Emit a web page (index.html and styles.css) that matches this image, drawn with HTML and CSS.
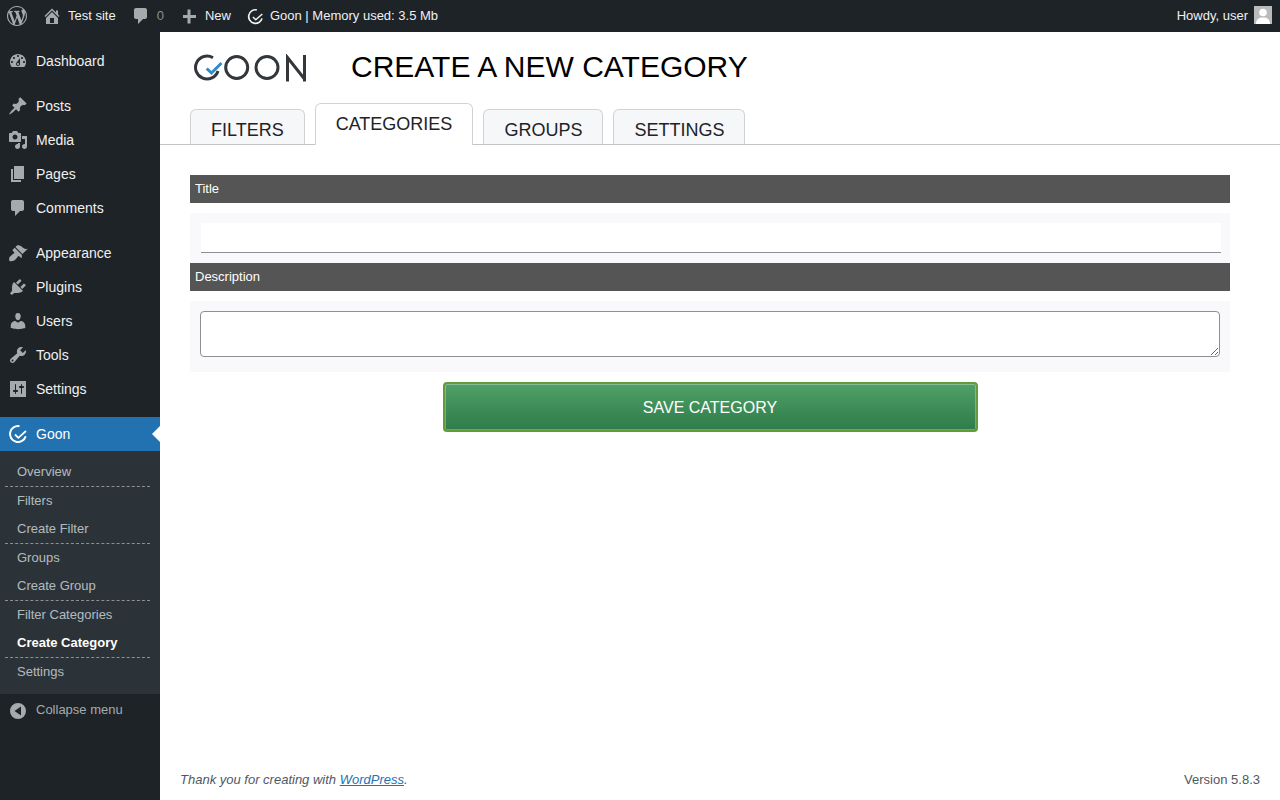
FILE: index.html
```html
<!DOCTYPE html>
<html lang="en">
<head>
<meta charset="utf-8">
<title>Create a new category</title>
<link rel="stylesheet" href="styles.css">
</head>
<body>
<svg class="defs" width="0" height="0" aria-hidden="true">
  <symbol id="goon" viewBox="0 0 20 20"><path d="M11.500 2.200A8 8 0 1 0 17.700 12.200" fill="none" stroke="currentColor" stroke-width="2"/><path d="M7 10.500l3.300 3.300L18 7" fill="none" stroke="currentColor" stroke-width="1.800"/></symbol>
</svg>
<header class="adminbar">
  <div class="ab-group">
    <svg class="ab-icon" viewBox="0 0 20 20"><path d="M20 10c0-5.510-4.490-10-10-10C4.480 0 0 4.490 0 10c0 5.520 4.480 10 10 10 5.510 0 10-4.480 10-10zM7.780 15.370L4.370 6.220c.55-.02 1.170-.08 1.170-.08.5-.06.44-1.130-.06-1.110 0 0-1.450.11-2.370.11-.18 0-.37 0-.58-.01C4.120 2.690 6.870 1.110 10 1.110c2.330 0 4.450.87 6.050 2.340-.68-.11-1.650.39-1.650 1.580 0 .74.45 1.360.9 2.100.35.61.55 1.360.55 2.460 0 1.490-1.400 5-1.400 5l-3.030-8.370c.54-.02.82-.17.82-.17.5-.05.44-1.250-.06-1.220 0 0-1.440.12-2.380.12-.87 0-2.330-.12-2.330-.12-.5-.03-.56 1.200-.06 1.220l.92.08 1.260 3.410zM17.410 10c.24-.64.74-1.870.43-4.250.7 1.290 1.050 2.710 1.050 4.250 0 3.290-1.730 6.240-4.400 7.780.97-2.590 1.940-5.200 2.920-7.780zM6.100 18.090C3.120 16.650 1.110 13.530 1.110 10c0-1.300.23-2.480.72-3.590C3.250 10.300 4.670 14.200 6.100 18.090zm4.030-6.630l2.580 6.980c-.86.29-1.760.45-2.710.45-.79 0-1.570-.11-2.290-.33.81-2.380 1.620-4.740 2.420-7.100z"/></svg>
    <a class="ab-item"><svg class="ab-icon" viewBox="0 0 20 20"><path fill-rule="evenodd" d="M16 8.500l1.530 1.530-1.060 1.060L10 4.620l-6.470 6.470-1.060-1.060L10 2.500l4 4v-2h2v4zm-6-2.460l6 5.990V18H4v-5.970zM12 17v-5H8v5h4z"/></svg>Test site</a>
    <a class="ab-item ab-muted"><svg class="ab-icon" viewBox="0 0 20 20"><path d="M5 2h9c1.100 0 2 .9 2 2v7c0 1.100-.9 2-2 2h-2l-5 5v-5H5c-1.100 0-2-.9-2-2V4c0-1.100.9-2 2-2z"/></svg>0</a>
    <a class="ab-item"><svg class="ab-icon" viewBox="0 0 20 20"><path d="M8.500 3.500h3v5.500H17v3h-5.500v5.500h-3V12H4V9h4.500z"/></svg>New</a>
    <a class="ab-item ab-goon"><svg class="ab-goon-icon"><use href="#goon"/></svg>Goon | Memory used: 3.5 Mb</a>
  </div>
  <a class="ab-user">Howdy, user
    <svg class="avatar" viewBox="0 0 18 18"><rect width="18" height="18" fill="#b9bbbd"/><circle cx="9" cy="6.500" r="3.800" fill="#fff"/><path d="M2 18c0-5 3-6.500 7-6.500s7 1.500 7 6.500z" fill="#fff"/></svg>
  </a>
</header>
<div class="shell">
  <nav class="sidebar">
    <ul class="menu">
      <li><a class="menu-item"><svg class="mi" viewBox="0 0 20 20"><path fill-rule="evenodd" d="M3.760 16h12.480c1.100-1.370 1.760-3.110 1.760-5 0-4.420-3.580-8-8-8s-8 3.580-8 8c0 1.890.66 3.630 1.760 5zM10 4c.55 0 1 .45 1 1s-.45 1-1 1-1-.45-1-1 .45-1 1-1zM6 6c.55 0 1 .45 1 1s-.45 1-1 1-1-.45-1-1 .45-1 1-1zm8 0c.55 0 1 .45 1 1s-.45 1-1 1-1-.45-1-1 .45-1 1-1zm-5.370 5.550L12 7v6c0 1.100-.9 2-2 2s-2-.9-2-2c0-.57.24-1.080.63-1.450zM4 10c.55 0 1 .45 1 1s-.45 1-1 1-1-.45-1-1 .45-1 1-1zm12 0c.55 0 1 .45 1 1s-.45 1-1 1-1-.45-1-1 .45-1 1-1zm-5 3c0-.55-.45-1-1-1s-1 .45-1 1 .45 1 1 1 1-.45 1-1z"/></svg>Dashboard</a></li>
      <li class="sep-top"><a class="menu-item"><svg class="mi" viewBox="0 0 20 20"><path d="M10.440 3.020l1.820-1.820 6.360 6.350-1.830 1.820c-1.050-.68-2.480-.57-3.410.36l-.75.75c-.92.93-1.040 2.350-.35 3.410l-1.830 1.820-2.410-2.410-2.800 2.790c-.42.42-3.380 2.710-3.800 2.290s1.860-3.390 2.280-3.810l2.790-2.790L4.100 9.360l1.830-1.820c1.050.69 2.480.57 3.400-.36l.75-.75c.93-.92 1.050-2.350.36-3.410z"/></svg>Posts</a></li>
      <li><a class="menu-item"><svg class="mi" viewBox="0 0 20 20"><path fill-rule="evenodd" d="M13 11V4c0-.55-.45-1-1-1h-1.670L9 1H5L3.670 3H2c-.55 0-1 .45-1 1v7c0 .55.45 1 1 1h10c.55 0 1-.45 1-1zM7 4.500c1.380 0 2.500 1.120 2.500 2.500S8.380 9.500 7 9.500 4.500 8.380 4.500 7 5.620 4.500 7 4.500zM14 6h5v10.500c0 1.380-1.120 2.500-2.500 2.500S14 17.880 14 16.500s1.120-2.500 2.500-2.500c.17 0 .34.02.5.05V9h-3V6zm-4 8.050V13h2v3.500c0 1.380-1.120 2.500-2.500 2.500S7 17.880 7 16.500 8.120 14 9.500 14c.17 0 .34.02.5.05z"/></svg>Media</a></li>
      <li><a class="menu-item"><svg class="mi" viewBox="0 0 20 20"><path d="M6 15V2h10v13H6zm-1 1h8v2H3V5h2v11z"/></svg>Pages</a></li>
      <li><a class="menu-item"><svg class="mi" viewBox="0 0 20 20"><path d="M5 2h9c1.100 0 2 .9 2 2v7c0 1.100-.9 2-2 2h-2l-5 5v-5H5c-1.100 0-2-.9-2-2V4c0-1.100.9-2 2-2z"/></svg>Comments</a></li>
      <li class="sep-top"><a class="menu-item"><svg class="mi" viewBox="0 0 20 20"><path d="M14.480 11.060L7.410 3.990l1.500-1.500c.5-.56 2.300-.47 3.510.32 1.210.8 1.430 1.280 2.910 2.100 1.180.64 2.450 1.260 4.450.85zm-.71.71L6.700 4.700 4.930 6.470c-.39.39-.39 1.020 0 1.410l1.060 1.060c.39.39.39 1.030 0 1.420-.6.6-1.430 1.110-2.210 1.690-.35.26-.7.53-1.010.84C1.430 13.230.78 15.550 1.370 18c2.450.59 4.770-.06 6.110-1.400.31-.31.58-.66.84-1.010.58-.78 1.090-1.610 1.690-2.210.39-.39 1.030-.39 1.420 0l1.060 1.060c.39.39 1.020.39 1.410 0z"/></svg>Appearance</a></li>
      <li><a class="menu-item"><svg class="mi" viewBox="0 0 20 20"><path d="M13.110 4.360L9.870 7.600 8 5.730l3.240-3.240c.35-.34 1.050-.2 1.560.32.52.51.66 1.210.31 1.550zm-8 1.770l.91-1.120 9.010 9.010-1.190.84c-.71.71-2.630 1.160-3.820 1.160H6.140L4.900 17.260c-.59.59-1.540.59-2.120 0-.59-.58-.59-1.530 0-2.120l1.240-1.240v-3.880c0-1.130.4-3.190 1.090-3.890zm7.260 3.970l3.240-3.240c.34-.35 1.040-.21 1.550.31.52.51.66 1.210.31 1.550l-3.240 3.250z"/></svg>Plugins</a></li>
      <li><a class="menu-item"><svg class="mi" viewBox="0 0 20 20"><path d="M10 9.250c-2.270 0-2.730-3.440-2.730-3.440C7 4.020 7.820 2 9.970 2c2.160 0 2.980 2.020 2.710 3.810 0 0-.41 3.440-2.680 3.440zm0 2.570L12.720 10c2.390 0 4.520 2.330 4.520 4.530v2.490s-3.650 1.130-7.240 1.130c-3.650 0-7.240-1.130-7.240-1.130v-2.490c0-2.250 1.940-4.480 4.470-4.480z"/></svg>Users</a></li>
      <li><a class="menu-item"><svg class="mi" viewBox="0 0 20 20"><path fill-rule="evenodd" d="M16.680 9.770c-1.340 1.340-3.300 1.670-4.950.99l-5.410 6.520c-.99.99-2.590.99-3.580 0s-.99-2.590 0-3.570l6.520-5.420c-.68-1.650-.35-3.610.99-4.950 1.280-1.280 3.120-1.620 4.720-1.060l-2.890 2.890 2.820 2.820 2.860-2.870c.53 1.580.18 3.390-1.080 4.650zM3.810 16.210c.4.39 1.040.39 1.430 0 .4-.4.4-1.040 0-1.430-.39-.4-1.030-.4-1.430 0-.39.39-.39 1.030 0 1.430z"/></svg>Tools</a></li>
      <li><a class="menu-item"><svg class="mi" viewBox="0 0 20 20"><path fill-rule="evenodd" d="M18 18V2H2v16zM8 11h1c.55 0 1 .45 1 1s-.45 1-1 1H8v1.500c0 .28-.22.5-.5.5s-.5-.22-.5-.5V13H6c-.55 0-1-.45-1-1s.45-1 1-1h1V5.500c0-.28.22-.5.5-.5s.5.22.5.5V11zm5-2h-1c-.55 0-1-.45-1-1s.45-1 1-1h1V5.500c0-.28.22-.5.5-.5s.5.22.5.5V7h1c.55 0 1 .45 1 1s-.45 1-1 1h-1v5.500c0 .28-.22.5-.5.5s-.5-.22-.5-.5V9z"/></svg>Settings</a></li>
      <li class="sep-top"><a class="menu-item current"><svg class="mi"><use href="#goon"/></svg>Goon</a>
        <ul class="submenu">
          <li class="dash"><a>Overview</a></li>
          <li><a>Filters</a></li>
          <li class="dash"><a>Create Filter</a></li>
          <li><a>Groups</a></li>
          <li class="dash"><a>Create Group</a></li>
          <li><a>Filter Categories</a></li>
          <li class="dash"><a class="active">Create Category</a></li>
          <li><a>Settings</a></li>
        </ul>
      </li>
    </ul>
    <a class="collapse"><svg class="mi collapse-icon" viewBox="0 0 20 20"><path fill-rule="evenodd" d="M10 2a8 8 0 1 1 0 16 8 8 0 0 1 0-16zM13 5.500L6.500 10l6.500 4.500z"/></svg>Collapse menu</a>
  </nav>
  <main class="main">
    <div class="page-head">
      <svg class="logo" viewBox="0 0 114 28">
        <path d="M20 3.700A11.500 11.500 0 1 0 25 17" fill="none" stroke="#32373c" stroke-width="3"/>
        <path d="M13.700 14.500l4.800 4.500 10-10" fill="none" stroke="#2e8ccb" stroke-width="3"/>
        <circle cx="43.700" cy="13.500" r="11" fill="none" stroke="#32373c" stroke-width="3"/>
        <circle cx="74" cy="13.500" r="11" fill="none" stroke="#32373c" stroke-width="3"/>
        <path d="M94.500 27.500V3.500L111.500 25M111.500 1v26.500" fill="none" stroke="#32373c" stroke-width="3"/>
      </svg>
      <h1 class="page-title">CREATE A NEW CATEGORY</h1>
    </div>
    <div class="tabs">
      <a class="tab">FILTERS</a>
      <a class="tab tab-active">CATEGORIES</a>
      <a class="tab">GROUPS</a>
      <a class="tab">SETTINGS</a>
    </div>
    <form class="form">
      <div class="bar bar-first">Title</div>
      <div class="field"><input class="text-input" type="text"></div>
      <div class="bar">Description</div>
      <div class="field field-area"><textarea class="area"></textarea></div>
      <div class="actions"><button class="save" type="button">SAVE CATEGORY</button></div>
    </form>
    <footer class="footer">
      <span class="thanks">Thank you for creating with <a class="wp-link">WordPress</a>.</span>
      <span>Version 5.8.3</span>
    </footer>
  </main>
</div>
</body>
</html>
```
FILE: styles.css
```css
* { box-sizing: border-box; }
html, body { margin: 0; height: 100%; }
body {
  font-family: "Liberation Sans", Arial, sans-serif;
  font-size: 13px;
  background: #fff;
  color: #3c434a;
  height: 800px;
  overflow: hidden;
  display: flex;
  flex-direction: column;
}
a { text-decoration: none; }
ul { list-style: none; margin: 0; padding: 0; }
.defs { position: absolute; }

.adminbar {
  height: 32px;
  flex: none;
  background: #1d2327;
  color: #f0f0f1;
  display: flex;
  align-items: center;
  justify-content: space-between;
  padding: 0 8px 2px 7px;
}
.ab-group { display: flex; align-items: center; gap: 15px; }
.ab-item { display: flex; align-items: center; gap: 6px; color: #f0f0f1; }
.ab-muted { color: #8c8f94; }
.ab-icon { width: 20px; height: 20px; fill: #a7aaad; flex: none; margin-top: 2px; }
.ab-goon-icon { width: 17px; height: 17px; color: #f0f0f1; flex: none; margin: 2px 0 0 1px; }
.ab-user { display: flex; align-items: center; gap: 6px; color: #f0f0f1; }
.avatar { width: 18px; height: 18px; }

.shell { flex: 1; display: flex; min-height: 0; }
.sidebar { width: 160px; flex: none; background: #1d2327; padding-top: 12px; }
.menu-item {
  height: 34px;
  display: flex;
  align-items: center;
  gap: 8px;
  padding-left: 8px;
  font-size: 14px;
  color: #f0f0f1;
  position: relative;
}
.mi { width: 20px; height: 20px; fill: #a7aaad; flex: none; }
.sep-top { margin-top: 11px; }
.current { background: #2271b1; color: #fff; }
.current .mi { color: #fff; }
.current::after {
  content: "";
  position: absolute;
  right: 0;
  top: 9px;
  border: 8px solid transparent;
  border-right-color: #fff;
  border-left-width: 0;
}
.submenu { background: #2c3338; padding: 7px 0 8px; }
.submenu li { margin: 0 10px 0 5px; }
.submenu a {
  display: block;
  padding: 5px 12px;
  line-height: 18px;
  color: rgba(240, 246, 252, .7);
}
.submenu .active { color: #fff; font-weight: 700; }
.submenu .dash { border-bottom: 1px dashed #8c8f94; }
.submenu li:last-child { border: 0; }
.collapse {
  display: flex;
  align-items: center;
  gap: 8px;
  height: 34px;
  padding: 0 0 4px 8px;
  color: #a7aaad;
}
.collapse-icon { margin-top: 3px; }

.main { flex: 1; min-width: 0; display: flex; flex-direction: column; }
.page-head { height: 71px; display: flex; align-items: flex-start; padding: 22px 0 0 33px; gap: 44px; }
.logo { width: 114px; height: 28px; flex: none; }
.page-title {
  margin: -4px 0 0;
  font-size: 30px;
  line-height: 34px;
  font-weight: 400;
  color: #000;
}
.tabs {
  height: 42px;
  display: flex;
  align-items: flex-end;
  gap: 10px;
  padding-left: 30px;
  border-bottom: 1px solid #c3c4c7;
}
.tab {
  height: 35px;
  padding: 9px 20px 0;
  font-size: 18px;
  line-height: 22px;
  color: #1d2327;
  background: #f6f7f9;
  border: 1px solid #d0d2d6;
  border-bottom: 0;
  border-radius: 6px 6px 0 0;
}
.tab-active { height: 42px; margin-bottom: -1px; background: #fff; }

.form { margin: 30px 0 0 30px; width: 1040px; }
.bar {
  height: 28px;
  line-height: 28px;
  padding-left: 5px;
  background: #555;
  color: #fff;
}
.bar-first { margin-bottom: 10px; }
.field { background: #f9f9fb; padding: 10px 9px 10px 11px; }
.text-input {
  display: block;
  width: 1020px;
  height: 30px;
  border: 0;
  border-bottom: 1px solid #8c8f94;
  background: #fff;
  outline: 0;
}
.field-area { margin-top: 10px; padding: 10px 10px 15px; }
.area {
  display: block;
  width: 1020px;
  height: 46px;
  border: 1px solid #8c8f94;
  border-radius: 4px;
  background: #fff;
}
.actions { display: flex; justify-content: center; margin-top: 10px; }
.save {
  width: 535px;
  height: 50px;
  padding: 2px 0 0;
  font: 16px "Liberation Sans", Arial, sans-serif;
  color: #fff;
  border: 2px solid #66993c;
  border-radius: 4px;
  background: linear-gradient(#51a068, #2d7c4a);
  box-shadow: inset 0 0 0 1px rgba(255, 255, 255, .3);
}
.footer {
  margin-top: auto;
  padding: 0 20px 12px;
  display: flex;
  justify-content: space-between;
  line-height: 16px;
  color: #50575e;
}
.thanks { font-style: italic; }
.wp-link { color: #2271b1; text-decoration: underline; }
```
